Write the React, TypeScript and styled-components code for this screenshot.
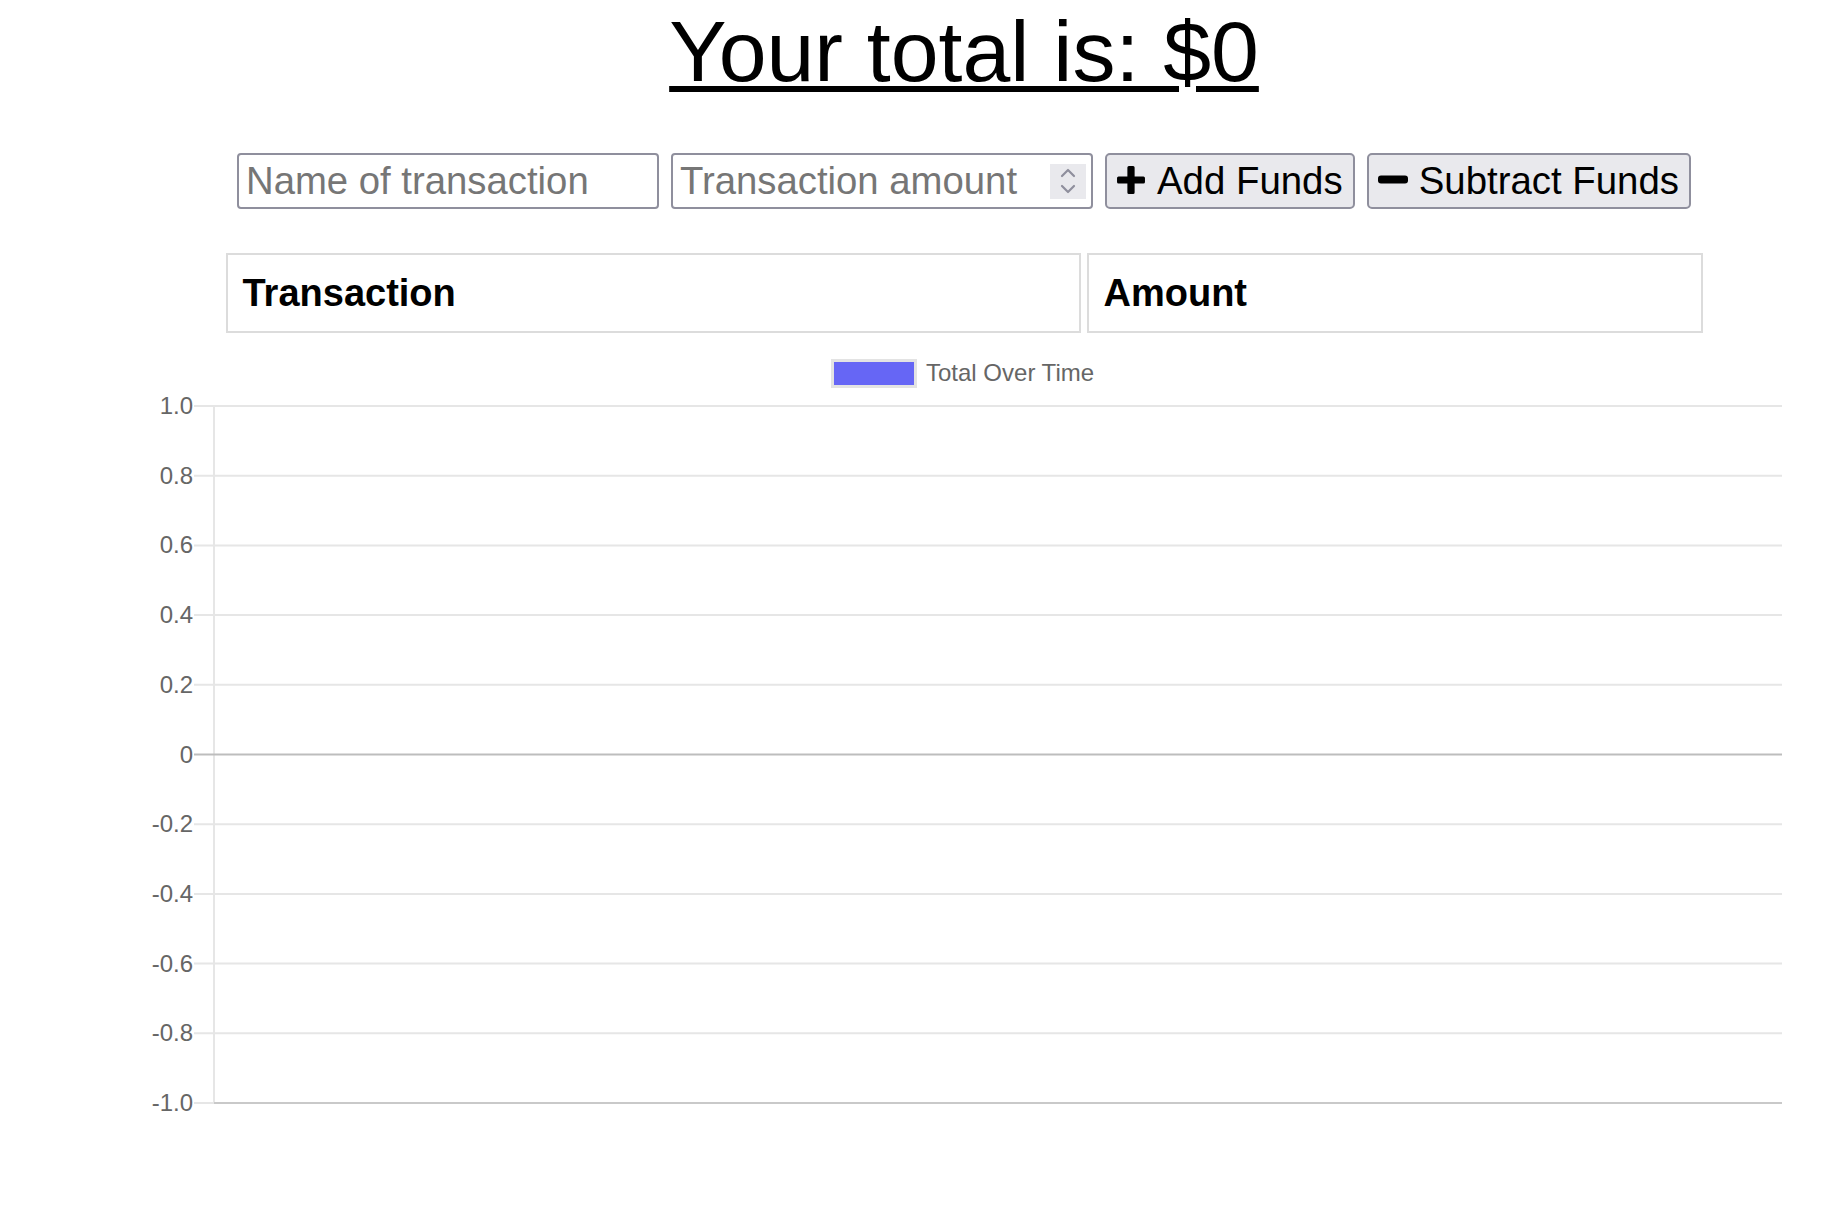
import { FC } from 'react'
import styled, { createGlobalStyle } from 'styled-components'

const GlobalStyle = createGlobalStyle`
  html, body {
    margin: 0;
    padding: 0;
    background: #fff;
  }
  body {
    font-family: "Liberation Sans", Arial, Helvetica, sans-serif;
    color: #000;
  }
`

const ticks = ['1.0', '0.8', '0.6', '0.4', '0.2', '0', '-0.2', '-0.4', '-0.6', '-0.8', '-1.0']

const GRID_TOP = 73
const GRID_STEP = 69.7
const AXIS_X = 120
const TICK_LEFT = 100
const GRID_RIGHT = 1688

const PlusIcon: FC = () => (
  <svg width="30" height="30" viewBox="0 0 29 29">
    <path
      d="M11 2.5a1.5 1.5 0 0 1 1.5-1.5h4a1.5 1.5 0 0 1 1.5 1.5V11h8.5a1.5 1.5 0 0 1 1.5 1.5v4a1.5 1.5 0 0 1-1.5 1.5H18v8.5a1.5 1.5 0 0 1-1.5 1.5h-4a1.5 1.5 0 0 1-1.5-1.5V18H2.5A1.5 1.5 0 0 1 1 16.5v-4A1.5 1.5 0 0 1 2.5 11H11z"
      fill="#000"
    />
  </svg>
)

const MinusIcon: FC = () => (
  <svg width="30" height="9" viewBox="0 0 30 9">
    <rect x="0" y="0.5" width="30" height="8" rx="3" fill="#000" />
  </svg>
)

const Spinner: FC = () => (
  <SpinBox>
    <svg width="16" height="28" viewBox="0 0 16 28" fill="none">
      <polyline points="2,9 8,3 14,9" stroke="#8f8f9d" strokeWidth="2.2" strokeLinecap="round" strokeLinejoin="round" />
      <polyline points="2,19 8,25 14,19" stroke="#8f8f9d" strokeWidth="2.2" strokeLinecap="round" strokeLinejoin="round" />
    </svg>
  </SpinBox>
)

const Chart: FC = () => {
  return (
    <ChartSvg width="1740" height="820" viewBox="0 0 1740 820">
      <rect x="738.5" y="27.5" width="83" height="26" fill="#6666f5" stroke="#e3e3e3" strokeWidth="3" />
      <LegendText x="832" y="48">Total Over Time</LegendText>
      <line x1={AXIS_X} y1={GRID_TOP} x2={AXIS_X} y2={GRID_TOP + GRID_STEP * 10} stroke="#e6e6e6" strokeWidth="2" />
      {ticks.map((label, i) => {
        const y = GRID_TOP + GRID_STEP * i
        const isZero = label === '0'
        const isBottom = i === ticks.length - 1
        return (
          <g key={label}>
            <line
              x1={TICK_LEFT}
              y1={y}
              x2={isBottom ? AXIS_X : GRID_RIGHT}
              y2={y}
              stroke={isZero ? '#bdbdbd' : '#e6e6e6'}
              strokeWidth="2"
            />
            {isBottom && <line x1={AXIS_X} y1={y} x2={GRID_RIGHT} y2={y} stroke="#c9c9c9" strokeWidth="2" />}
            <TickText x="99" y={y + 8}>
              {label}
            </TickText>
          </g>
        )
      })}
    </ChartSvg>
  )
}

const App: FC = () => {
  return (
    <Page>
      <GlobalStyle />
      <Title>Your total is: $0</Title>
      <Form>
        <TextInput type="text" placeholder="Name of transaction" />
        <NumberField>
          <NumberInput type="number" placeholder="Transaction amount" />
          <Spinner />
        </NumberField>
        <Button>
          <PlusIcon />
          Add Funds
        </Button>
        <Button>
          <MinusIcon />
          Subtract Funds
        </Button>
      </Form>
      <TableHead>
        <HeadCell>Transaction</HeadCell>
        <HeadCell>Amount</HeadCell>
      </TableHead>
      <Chart />
    </Page>
  )
}

const Page = styled.div`
  padding-left: 94px;
  width: 1740px;
`

const Title = styled.h1`
  margin: 0;
  padding-top: 1px;
  font-size: 86px;
  line-height: 100px;
  font-weight: 400;
  text-align: center;
  text-decoration: underline;
  text-decoration-thickness: 6px;
  text-underline-offset: 5px;
`

const Form = styled.div`
  display: flex;
  justify-content: center;
  gap: 12px;
  margin-top: 52px;
  height: 56px;
`

const fieldBox = `
  box-sizing: border-box;
  height: 56px;
  width: 422px;
  border: 2px solid #8f8f9d;
  border-radius: 4px;
  background: #fff;
`

const TextInput = styled.input`
  ${fieldBox}
  padding: 0 7px;
  font-family: "Liberation Sans", Arial, sans-serif;
  font-size: 38.3px;
  color: #000;
  outline: none;

  &::placeholder {
    color: #767676;
  }
`

const NumberField = styled.div`
  ${fieldBox}
  display: flex;
  align-items: center;
  padding: 0 5px 0 7px;
`

const NumberInput = styled.input`
  flex: 1;
  min-width: 0;
  border: none;
  padding: 0;
  outline: none;
  font-family: "Liberation Sans", Arial, sans-serif;
  font-size: 38.3px;
  background: transparent;
  -moz-appearance: textfield;

  &::placeholder {
    color: #767676;
  }

  &::-webkit-inner-spin-button,
  &::-webkit-outer-spin-button {
    -webkit-appearance: none;
    margin: 0;
  }
`

const SpinBox = styled.div`
  width: 36px;
  height: 35px;
  background: #e9e9ed;
  display: flex;
  align-items: center;
  justify-content: center;
`

const Button = styled.button`
  box-sizing: border-box;
  height: 56px;
  display: flex;
  align-items: center;
  gap: 11px;
  padding: 0 10px 0 9px;
  border: 2px solid #8f8f9d;
  border-radius: 5px;
  background: #e9e9ed;
  font-family: "Liberation Sans", Arial, sans-serif;
  font-size: 38.4px;
  color: #000;
  cursor: pointer;

  svg {
    flex-shrink: 0;
    margin-top: -3px;
  }
`

const TableHead = styled.div`
  display: grid;
  grid-template-columns: 855px 616px;
  gap: 6px;
  width: 1477px;
  margin: 44px auto 0;
`

const HeadCell = styled.div`
  box-sizing: border-box;
  height: 80px;
  display: flex;
  align-items: center;
  padding-left: 15px;
  border: 2px solid #dcdcdc;
  font-size: 38px;
  font-weight: 700;
`

const ChartSvg = styled.svg`
  display: block;
  font-family: "Liberation Sans", Arial, Helvetica, sans-serif;
`

const LegendText = styled.text`
  font-size: 24px;
  fill: #666;
`

const TickText = styled.text`
  font-size: 24px;
  fill: #666;
  text-anchor: end;
`

export default App
